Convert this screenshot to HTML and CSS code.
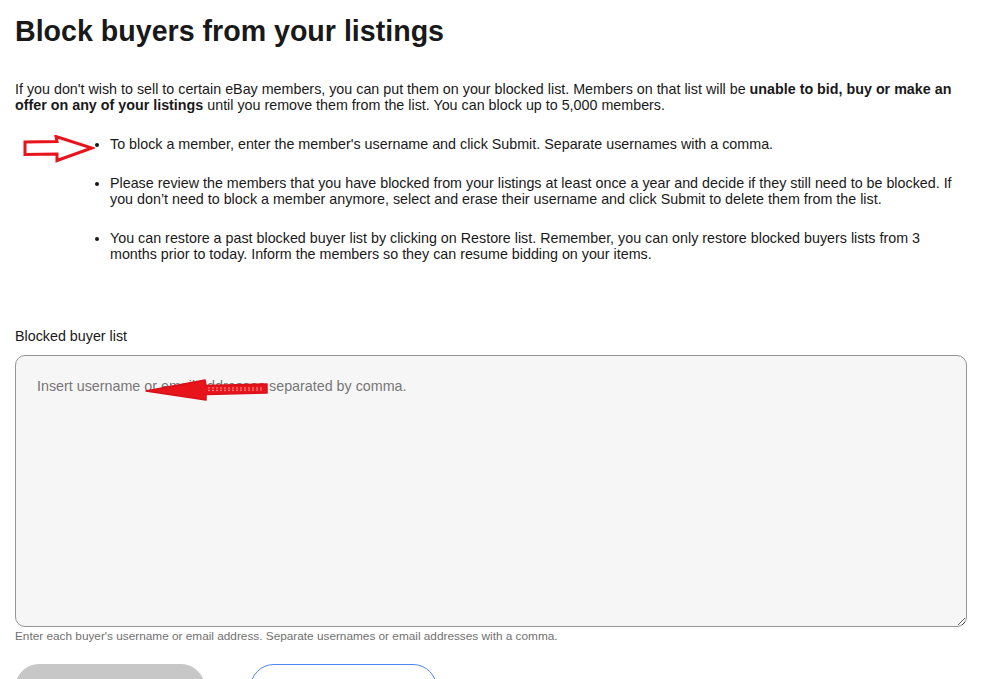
FILE: index.html
```html
<!DOCTYPE html>
<html lang="en">
<head>
<meta charset="utf-8">
<title>Block buyers from your listings</title>
<link rel="stylesheet" href="styles.css">
</head>
<body>
<main class="page">
  <h1 class="title">Block buyers from your listings</h1>
  <p class="intro">If you don't wish to sell to certain eBay members, you can put them on your blocked list. Members on that list will be <strong>unable to bid, buy or make an offer on any of your listings</strong> until you remove them from the list. You can block up to 5,000 members.</p>
  <div class="list-wrap">
    <svg class="arrow-right" width="72" height="28" viewBox="0 0 72 28" aria-hidden="true">
      <path d="M2 7 L34 6.5 L33 1.5 L69 13 L34 25.5 L34 19 L2 19.5 Z" fill="none" stroke="#e8141c" stroke-width="3" stroke-linejoin="miter"/>
    </svg>
    <ul class="rules">
      <li>To block a member, enter the member's username and click Submit. Separate usernames with a comma.</li>
      <li>Please review the members that you have blocked from your listings at least once a year and decide if they still need to be blocked. If you don’t need to block a member anymore, select and erase their username and click Submit to delete them from the list.</li>
      <li>You can restore a past blocked buyer list by clicking on Restore list. Remember, you can only restore blocked buyers lists from 3 months prior to today. Inform the members so they can resume bidding on your items.</li>
    </ul>
  </div>
  <label class="field-label" for="blocked">Blocked buyer list</label>
  <div class="field">
    <textarea id="blocked" class="textarea" placeholder="Insert username or email addresses separated by comma."></textarea>
    <svg class="arrow-left" width="126" height="24" viewBox="0 0 126 24" aria-hidden="true">
      <path d="M2 13 L61 2 L62 7.5 L123 6 L123 15 L62 16.5 L62 22 Z" fill="#e8141c" stroke="#d9101a" stroke-width="1.5" stroke-linejoin="round"/>
      <path d="M64 10 L120 10 M64 12.5 L118 12" stroke="#ffffff" stroke-width="0.8" stroke-dasharray="2 2" opacity="0.7"/>
    </svg>
  </div>
  <p class="help">Enter each buyer's username or email address. Separate usernames or email addresses with a comma.</p>
  <div class="actions">
    <button class="btn btn-primary" type="button" disabled>Submit</button>
    <button class="btn btn-secondary" type="button">Restore list</button>
  </div>
</main>
</body>
</html>
```
FILE: styles.css
```css
* { box-sizing: border-box; }
html, body { margin: 0; padding: 0; background: #ffffff; }
body {
  font-family: "Liberation Sans", Arial, sans-serif;
  color: #191919;
  font-size: 14.3px;
  line-height: 16px;
}
.page {
  width: 967px;
  padding: 15px 0 40px 15px;
}
.title {
  margin: 0;
  font-size: 28.6px;
  line-height: 33px;
  font-weight: 700;
  color: #191919;
}
.intro {
  margin: 33px 0 0 0;
  line-height: 16px;
}
.intro strong { font-weight: 700; }
.list-wrap {
  position: relative;
}
.arrow-right {
  position: absolute;
  left: 8px;
  top: -1px;
}
.rules {
  margin: 23px 0 0 0;
  padding: 0 0 0 95px;
  list-style: disc;
}
.rules li {
  margin: 0 0 23px 0;
  line-height: 16px;
}
.rules li:last-child { margin-bottom: 0; }
.field-label {
  display: block;
  margin-top: 66px;
  line-height: 16px;
}
.field {
  position: relative;
  margin-top: 11px;
}
.textarea {
  display: block;
  width: 952px;
  height: 272px;
  margin: 0;
  padding: 22px 21px;
  border: 1px solid #959595;
  border-radius: 10px;
  background: #f6f6f6;
  font-family: "Liberation Sans", Arial, sans-serif;
  font-size: 14.3px;
  line-height: 16px;
  color: #191919;
  resize: vertical;
}
.textarea::placeholder { color: #767676; opacity: 1; }
.arrow-left {
  position: absolute;
  left: 129px;
  top: 23px;
}
.help {
  margin: 1px 0 0 0;
  font-size: 11.8px;
  line-height: 16px;
  color: #707070;
}
.actions {
  display: flex;
  gap: 45px;
  margin-top: 20px;
}
.btn {
  height: 48px;
  border-radius: 24px;
  font-family: "Liberation Sans", Arial, sans-serif;
  font-size: 16px;
  font-weight: 700;
  padding: 20px 20px 0;
}
.btn-primary {
  width: 190px;
  background: #c7c7c7;
  border: 1px solid #c7c7c7;
  color: #ffffff;
}
.btn-secondary {
  width: 187px;
  background: #ffffff;
  border: 1px solid #4d86f0;
  color: #3665f3;
}
```
